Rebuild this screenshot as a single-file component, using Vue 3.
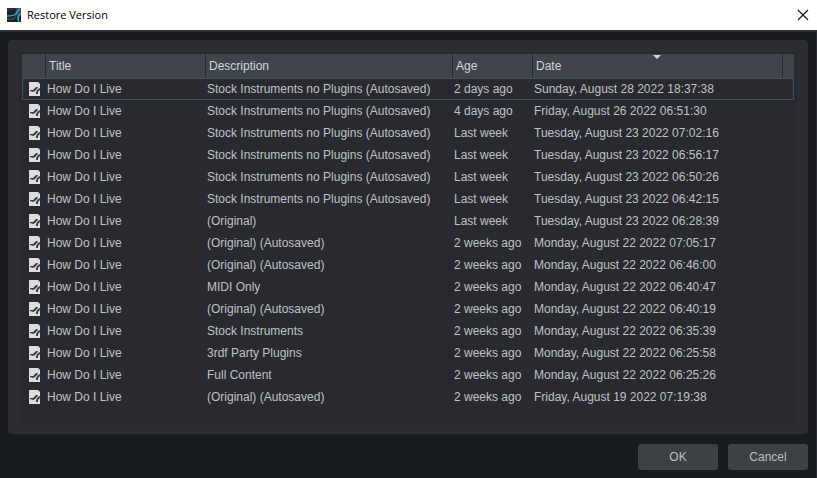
<!-- src/App.vue -->
<template>
  <div class="window">
    <header class="titlebar">
      <svg class="logo" width="14" height="14" viewBox="0 0 14 14" aria-hidden="true">
        <rect width="14" height="14" fill="#1b2127" />
        <path d="M9 0 H14 V5 L11 7 L8 9 Z" fill="#434a51" />
        <path d="M0 3 L6 2 L9 0 H0 Z" fill="#2b3137" />
        <path d="M0 8 C4 8 8 8 9.500 5 C11 2.500 11.500 1.500 13 0.500" fill="none" stroke="#2aa4d0" stroke-width="1.5" />
        <path d="M14 6 C11 7 10 10 12 13.500" fill="none" stroke="#2fb4e2" stroke-width="1.5" />
        <path d="M0 11 C4 12 7 11 9 9" fill="none" stroke="#424c55" stroke-width="1.5" />
      </svg>
      <h1>Restore Version</h1>
      <button type="button" class="close" aria-label="Close">
        <svg width="12" height="12" viewBox="0 0 12 12" aria-hidden="true">
          <path d="M1 1 L11 11 M11 1 L1 11" fill="none" stroke="#111" stroke-width="1.1" />
        </svg>
      </button>
    </header>

    <main class="body">
      <div class="panel">
        <div class="list">
          <table>
            <colgroup>
              <col class="col-icon" />
              <col class="col-title" />
              <col class="col-description" />
              <col class="col-age" />
              <col />
              <col class="col-end" />
            </colgroup>
            <thead>
              <tr>
                <th></th>
                <th>Title</th>
                <th>Description</th>
                <th>Age</th>
                <th class="sorted" aria-sort="descending">Date</th>
                <th></th>
              </tr>
            </thead>
            <tbody>
              <tr
                v-for="(version, index) in versions"
                :key="version.date"
                :class="{ selected: index === selected }"
                @click="selected = index"
              >
                <td class="icon">
                  <svg width="11" height="14" viewBox="0 0 11 14" aria-hidden="true">
                    <path d="M0 0 H9 L11 2 V14 H0 Z" fill="#dddedf" />
                    <path d="M9 0 L11 2 H9 Z" fill="#b4b6b8" />
                    <path d="M1 8 L4 8 L7 5 H9 L8 7 L6 9 L4 10 L1 9 Z" fill="#3a3e43" />
                    <path d="M11 6 L9 7 L7 10 L7 12 H9 L9 10 L11 8 Z" fill="#3a3e43" />
                  </svg>
                </td>
                <td>{{ version.title }}</td>
                <td>{{ version.description }}</td>
                <td>{{ version.age }}</td>
                <td colspan="2">{{ version.date }}</td>
              </tr>
            </tbody>
          </table>
        </div>
      </div>

      <footer class="actions">
        <button type="button">OK</button>
        <button type="button">Cancel</button>
      </footer>
    </main>
  </div>
</template>

<script setup>
import { ref } from "vue";

const selected = ref(0);

const autosaved = "Stock Instruments no Plugins (Autosaved)";

// Newest version first: description, age, date
const versions = [
  [autosaved, "2 days ago", "Sunday, August 28 2022 18:37:38"],
  [autosaved, "4 days ago", "Friday, August 26 2022 06:51:30"],
  [autosaved, "Last week", "Tuesday, August 23 2022 07:02:16"],
  [autosaved, "Last week", "Tuesday, August 23 2022 06:56:17"],
  [autosaved, "Last week", "Tuesday, August 23 2022 06:50:26"],
  [autosaved, "Last week", "Tuesday, August 23 2022 06:42:15"],
  ["(Original)", "Last week", "Tuesday, August 23 2022 06:28:39"],
  ["(Original) (Autosaved)", "2 weeks ago", "Monday, August 22 2022 07:05:17"],
  ["(Original) (Autosaved)", "2 weeks ago", "Monday, August 22 2022 06:46:00"],
  ["MIDI Only", "2 weeks ago", "Monday, August 22 2022 06:40:47"],
  ["(Original) (Autosaved)", "2 weeks ago", "Monday, August 22 2022 06:40:19"],
  ["Stock Instruments", "2 weeks ago", "Monday, August 22 2022 06:35:39"],
  ["3rdf Party Plugins", "2 weeks ago", "Monday, August 22 2022 06:25:58"],
  ["Full Content", "2 weeks ago", "Monday, August 22 2022 06:25:26"],
  ["(Original) (Autosaved)", "2 weeks ago", "Friday, August 19 2022 07:19:38"],
].map(([description, age, date]) => ({ title: "How Do I Live", description, age, date }));
</script>

<style>
body { margin: 0; background: #181c1f; }
</style>

<style scoped>
.window { display: flex; flex-direction: column; min-height: 100vh; box-sizing: border-box; background: #181c1f; color: #bfc2c5; font: 12px/20px "Liberation Sans", Arial, sans-serif; }
.titlebar { display: flex; align-items: center; gap: 6px; height: 30px; padding: 0 8px 0 7px; background: #fff; }
h1 { flex: 1; margin: 0; color: #000; font: 11px/16px "Open Sans", "Segoe UI", sans-serif; }
.close { display: flex; padding: 0; border: 0; background: none; cursor: pointer; }
.body { flex: 1; padding: 8px; border-top: 2px solid #2a2e34; border-right: 1px solid #2a2e34; }
.panel { padding: 12px 11px 11px; border-radius: 4px; background: #2c2d32; }
.list { padding: 2px 3px 15px; background: #292a2f; }
table { width: 100%; table-layout: fixed; border-collapse: separate; border-spacing: 0; }
.col-icon { width: 24px; }
.col-title { width: 160px; }
.col-description { width: 247px; }
.col-age { width: 80px; }
.col-end { width: 11px; }
th { height: 24px; padding: 0 3px; box-sizing: border-box; border-right: 1px solid #292b30; background: #40444b; color: #d4d6d8; font-weight: normal; text-align: left; white-space: nowrap; }
th:last-child { border-right: 0; }
.sorted { position: relative; }
.sorted::after { content: ""; position: absolute; top: 1px; left: 50%; margin-left: -5px; border: 4px solid transparent; border-top-color: #d4d6d8; border-bottom: 0; }
td { height: 22px; padding: 0 1px; box-sizing: border-box; border: 1px solid transparent; border-width: 1px 0; white-space: nowrap; cursor: default; }
.icon { padding: 0 0 0 7px; }
.icon svg { display: block; }
.selected td { border-color: #3d4f63; }
.selected td:first-child { border-left-width: 1px; padding-left: 6px; }
.selected td:last-child { border-right-width: 1px; }
.actions { display: flex; justify-content: flex-end; gap: 10px; margin-top: 10px; }
.actions button { width: 80px; height: 26px; padding: 0; border: 0; border-radius: 3px; background: #3c4144; color: #b9bdc0; font: inherit; cursor: pointer; }
</style>
